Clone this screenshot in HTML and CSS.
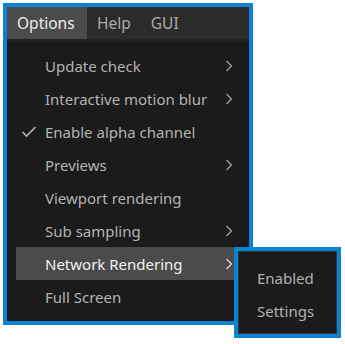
FILE: index.html
```html
<!DOCTYPE html>
<html lang="en">
<head>
  <meta charset="UTF-8">
  <title>Options menu</title>
  <link rel="stylesheet" href="styles.css">
</head>
<body>
  <div class="menu-window">
    <div class="menubar">
      <div class="menubar-item active">Options</div>
      <div class="menubar-item">Help</div>
      <div class="menubar-item">GUI</div>
    </div>
    <div class="dropdown">
      <div class="item">
        <span class="label">Update check</span>
        <svg class="chevron" width="8" height="12" viewBox="0 0 8 12"><polyline points="1.5,1 6.5,6 1.5,11"/></svg>
      </div>
      <div class="item">
        <span class="label">Interactive motion blur</span>
        <svg class="chevron" width="8" height="12" viewBox="0 0 8 12"><polyline points="1.5,1 6.5,6 1.5,11"/></svg>
      </div>
      <div class="item">
        <svg class="check" width="16" height="12" viewBox="0 0 16 12"><polyline points="1.5,6 5.5,10 14.5,1"/></svg>
        <span class="label">Enable alpha channel</span>
      </div>
      <div class="item">
        <span class="label">Previews</span>
        <svg class="chevron" width="8" height="12" viewBox="0 0 8 12"><polyline points="1.5,1 6.5,6 1.5,11"/></svg>
      </div>
      <div class="item">
        <span class="label">Viewport rendering</span>
      </div>
      <div class="item">
        <span class="label">Sub sampling</span>
        <svg class="chevron" width="8" height="12" viewBox="0 0 8 12"><polyline points="1.5,1 6.5,6 1.5,11"/></svg>
      </div>
      <div class="item selected">
        <span class="label">Network Rendering</span>
        <svg class="chevron" width="8" height="12" viewBox="0 0 8 12"><polyline points="1.5,1 6.5,6 1.5,11"/></svg>
      </div>
      <div class="item">
        <span class="label">Full Screen</span>
      </div>
    </div>
  </div>

  <div class="submenu">
    <div class="submenu-inner">
      <div class="sub-item">Enabled</div>
      <div class="sub-item">Settings</div>
    </div>
  </div>
</body>
</html>
```

FILE: styles.css
```css
body {
  margin: 0;
  background-color: #ffffff;
  font-family: "Noto Sans", "Open Sans", sans-serif;
  font-size: 15px;
}

.menu-window {
  position: relative;
  box-sizing: border-box;
  width: 250px;
  height: 322px;
  margin: 3px;
  border: 4px solid #0a84d2;
  background-color: #1b1b1b;
}

.menubar {
  display: flex;
  height: 32px;
  background-color: #2b2b2b;
  border-bottom: 2px solid #222222;
}

.menubar-item {
  display: flex;
  align-items: center;
  padding: 0 10px;
  color: #a9a9a9;
  font-size: 15.5px;
}

.menubar-item.active {
  width: 80px;
  box-sizing: border-box;
  background-color: #4b4b4b;
  color: #ececec;
}

.dropdown {
  display: flex;
  flex-direction: column;
  padding: 8px 0;
}

.item {
  position: relative;
  display: flex;
  align-items: center;
  height: 33px;
  margin: 0 8px 0 9px;
  padding-left: 29px;
  color: #b3b3b3;
}

.item.selected {
  background-color: #4b4b4b;
  color: #f2f2f2;
}

.chevron {
  position: absolute;
  left: 209px;
  top: 11px;
  fill: none;
  stroke: #a0a0a0;
  stroke-width: 1.3;
}

.item.selected .chevron {
  stroke: #dcdcdc;
}

.check {
  position: absolute;
  left: 5px;
  top: 11px;
  fill: none;
  stroke: #b3b3b3;
  stroke-width: 1.6;
}

.submenu {
  position: absolute;
  left: 234px;
  top: 247px;
  box-sizing: border-box;
  width: 107px;
  height: 91px;
  border: 4px solid #0a84d2;
  background-color: #1b1b1b;
}

.submenu-inner {
  box-sizing: border-box;
  height: 100%;
  border: 1px solid #353535;
  padding-top: 9px;
}

.sub-item {
  display: flex;
  align-items: center;
  height: 33px;
  padding-left: 18px;
  color: #b3b3b3;
}
```
